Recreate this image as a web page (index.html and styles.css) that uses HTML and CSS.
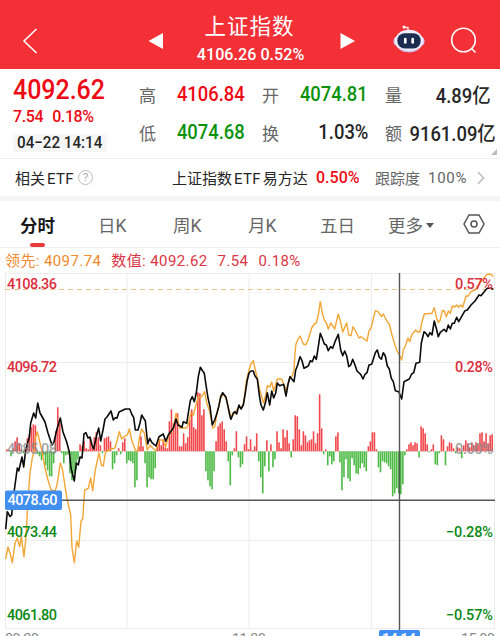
FILE: index.html
```html
<!DOCTYPE html>
<html lang="zh-CN">
<head>
  <meta charset="UTF-8">
  <meta name="viewport" content="width=device-width, initial-scale=1.0">
  <title>上证指数</title>
  <link rel="stylesheet" href="styles.css">
</head>
<body>

<header class="header">
  <svg class="back" width="16" height="28" viewBox="0 0 16 28"><path d="M14.5 2 L2 14 L14.5 26" /></svg>
  <svg class="prev" width="16" height="18" viewBox="0 0 16 18"><path d="M0.5 9 L15 1 V17 Z" /></svg>
  <div class="title">
    <h1>上证指数</h1>
    <p><span class="num">4106.26 0.52%</span></p>
  </div>
  <svg class="next" width="16" height="18" viewBox="0 0 16 18"><path d="M15 9 L0.5 1 V17 Z" /></svg>
  <svg class="robot" width="32" height="30" viewBox="0 0 32 30">
    <path d="M15 7 V3.5 H11" fill="none" stroke="#f9dede" stroke-width="1.4" />
    <circle cx="11" cy="3" r="1.5" fill="#fff" />
    <rect x="0.5" y="12" width="31" height="10.5" rx="5" fill="#d4cbf3" />
    <ellipse cx="16" cy="17" rx="14" ry="11.3" fill="#f1efff" />
    <path d="M5 23 Q16 31 27 23 Q23 28.4 16 28.3 Q9 28.4 5 23" fill="#c9b8ee" />
    <rect x="4.3" y="9.2" width="23.4" height="15.2" rx="7.4" fill="#1c2c50" />
    <rect x="11" y="13.8" width="2.6" height="6" rx="1.3" fill="#fff" />
    <rect x="18.4" y="13.8" width="2.6" height="6" rx="1.3" fill="#fff" />
  </svg>
  <svg class="search" width="28" height="28" viewBox="0 0 28 28"><circle cx="13.5" cy="13" r="11.8" /><path d="M21.5 21.5 L25.5 25.5" /></svg>
</header>

<section class="quote">
  <div class="quote-main">
    <div class="price"><span class="num">4092.62</span></div>
    <div class="change"><span>7.54</span><span>0.18%</span></div>
    <div class="date"><span class="num">04−22 14:14</span></div>
  </div>
  <dl class="quote-grid">
    <div><dt>高</dt><dd class="red">4106.84</dd></div>
    <div><dt>开</dt><dd class="green">4074.81</dd></div>
    <div><dt>量</dt><dd>4.89亿</dd></div>
    <div><dt>低</dt><dd class="green">4074.68</dd></div>
    <div><dt>换</dt><dd>1.03%</dd></div>
    <div><dt>额</dt><dd>9161.09亿</dd></div>
  </dl>
  <i class="corner"></i>
</section>

<section class="etf">
  <span class="etf-label">相关<b>ETF</b></span>
  <span class="help">?</span>
  <span class="etf-name">上证指数<b>ETF</b>易方达</span>
  <span class="etf-rate">0.50%</span>
  <span class="etf-track">跟踪度</span>
  <span class="etf-pct">100%</span>
  <svg width="8" height="14" viewBox="0 0 8 14"><path d="M1 1 L6.5 7 L1 13" /></svg>
</section>

<nav class="tabs">
  <a class="active">分时</a>
  <a>日K</a>
  <a>周K</a>
  <a>月K</a>
  <a>五日</a>
  <a>更多<i class="caret"></i></a>
  <svg width="22" height="20" viewBox="0 0 22 20"><path d="M6 1 H16 L21 10 L16 19 H6 L1 10 Z" /><circle cx="11" cy="10" r="3" /></svg>
</nav>

<div class="legend">
  <span class="lead">领先: 4097.74</span>
  <span>数值: 4092.62</span>
  <span>7.54</span>
  <span>0.18%</span>
</div>

<svg class="chart" width="500" height="363" viewBox="0 273 500 363">
  <g class="grid">
    <path d="M5 273.5 H494 M5 362.5 H494 M5 451.5 H494 M5 540.5 H494 M5 628.5 H494" />
    <path d="M5.5 273 V629 M127 273 V629 M249 273 V629 M371.5 273 V629 M494.5 273 V629" />
  </g>
  <path class="dash" d="M5 289.5 H494" />

  <g id="bars"></g>

  <polyline class="line-lead" points="5.7,559 8,547 10,553 12.3,562.7 15,543.3 17.3,538 19.7,546.7 21.3,536.7 24,556.7 26,536.7 28,500 30,473 32.3,458 34.3,450 35.3,438 37.3,432 39.3,440 42,451.7 45,468 48,480 51,490 55,491 57,485 59,471.7 60.3,463 62.7,470 65,486.7 67.3,500 70.7,515 72,548 74.3,562.7 76.7,541 78.7,547.3 81,521 82.7,519 84.7,490 88.3,488.3 90.7,478 92.7,490.7 95.3,470 99,452.7 101.3,465 103.3,466 105.3,453 108,450 115,448 117.3,440 119.3,431.7 121.7,439 124,436.7 127.3,435 129.3,429 131.7,440 135.7,451 137.7,451 139.3,438 141.7,429 144.3,433 147.3,450 150,445 152.5,448 156,450.7 159.3,440 163.3,440 165.7,446.7 168.3,436.7 173.3,428.3 176,413.3 178,421.7 180,428 186.7,428 188.7,423 190.7,413 193.3,415 196,405 198.3,396.7 200.3,398 202.7,395 204.7,391.7 206.7,403 209.3,410 211,418 212.7,428 214.7,426.7 216.7,415 220.7,398 223.3,394 226,398 231,417 235,413 239,406 241,409 244,401.7 246,383 249,370 251,364 253.3,360.7 255.3,370 257.3,378 259.7,390 263.7,403 265.7,395 267.3,385.7 269.7,387 271.7,382 273.7,391 277.3,379 281.7,379 284,385 286.3,390 290,376.7 292.3,376 294,370 295,353 296,344 297.7,340 300,336 303.3,344 306,344.7 308.3,339 311.7,328 314.3,324 316.3,323 318.3,315 320.3,301.7 322.3,313 324.3,320 326.3,322.7 328.3,329 330.7,323 334.7,329 338.3,314 340.3,320.7 342.7,332 346.7,323 348.7,335 351,335.7 353,326.7 355,330 359,338 361,336.7 364.3,339 367,341 369,330.7 371,328 375.3,310.7 378,311.7 381.3,316.7 383.3,314 387.3,322 389.3,324 392,335 395,345 396.7,350 399.3,355 401.7,360 403.3,350 405.3,346 408,338 409.7,341.7 411.7,335 415.7,330 417.7,332 420,332 422,321.7 424.3,314 432,313.3 434.3,307.7 436.3,316.7 438.3,322.7 440.3,320 442.3,310.7 444.3,310.7 446.3,316.7 448.3,311 450.3,313.3 452.3,306 454.7,307 456.7,305 458.7,307.3 460.7,305 462.7,307.3 466,296 468.3,296 471,291.7 475,290 478.3,285 481.7,280.7 485,276.7 487.3,274.3 490.7,274.3 493.3,276.7" />
  <polyline class="line-price" points="5.7,529.3 7.3,511.7 10,516.5 11.7,515 13,500 17.3,468 18.7,471 22,457 23.7,467 25.7,450 29.3,437 30.7,423 32.5,417 33.7,413 35.7,418 37.7,403 40,413 42.3,417 45,422 48,433 52,445 54,442 56.7,430 60.3,418 63,432 66.7,442 69.3,452 71,468 74.3,481 76.3,463 78.3,465 80,457 82,458 84,434 86,432.7 88,438 90,437 92,445 93.7,449 96.7,435 98.7,428 100.7,441 103,430 105,419 107,417 111,411 113.3,420 115.3,417.7 117,418 119,412 121.7,410.7 125.3,409 129.7,409 131.7,414 133.7,417.7 135.3,430 138,430 140,423 141.7,415 143.3,417.7 145.3,420.7 147.7,444 149.7,438.3 152,442.7 156,446 159,436.7 163.3,434 165.7,441.3 168.3,435 173.3,428 176,419 178,425 182,427.3 183.3,421.7 186.7,423.3 188.3,413 190.3,400.7 192.3,396.7 194.3,401.7 196.3,393 198.3,376.7 200.3,367.3 202.7,371 204.3,373.3 206,385 208,398 210,406.7 212.3,425 214.7,420 216.7,414 218.7,406.7 220.7,396.7 222.7,392.7 226,397.3 228,406.7 230,416.7 231,419.3 233.3,413 235,411.7 236.7,414 239,405 241,409 243.3,405 245.3,393 247.3,380 249,373 251,371 253.3,371 255,376 257.3,379 259.3,395 261,405 263.3,410 265.7,401.7 267.3,392.7 269.7,405 271.7,391 273.7,398 275.7,393 277.3,383 279.7,385.7 283.7,384.3 286,396 288,384.3 290,376.7 294,381.7 295.7,370 297.7,365 300,356.7 302,360.7 304,368.3 308.3,366 310.3,360.7 312.3,361.7 314.3,356 316.3,359.3 318.3,346.7 320.3,333.3 322.3,338.3 324.3,344 326.3,345 328.3,350.7 330.7,346.7 332.7,348.3 335,341.7 338.3,334.3 340.7,350 342.7,355.7 344.7,351 346.7,356 348.7,366.7 350.7,365 352.7,359.3 355,365 357,371 360.7,374.3 363,379 365,374.3 367,372.7 369,365 371.7,364.3 373.3,359.3 375.3,352.7 377.3,350 379.3,357.3 381.3,359.3 383.3,352.7 385.3,356 387.3,366 389.3,369 391.3,378.3 393.3,381.7 395.3,390.7 398.7,391.7 401.7,399 404,381.7 409.3,379 411.7,374 413.7,372.7 416,363.3 419.7,362.3 421.3,343.3 424,331.7 426,333.3 428,336.7 430,332.7 432,335 434.3,321 436.3,328.3 438.3,336.7 440.3,332.3 444,329.3 446.3,331.7 448.3,325 450.3,329 452.3,323.3 454.3,323.3 456.7,317.3 458.7,321.7 465,310.7 467.3,310 471,305 475,301 479,295 481,295.7 485,290.7 487.3,288.3 490.7,288.3 493.3,289.3" />

  <g class="labels">
    <text class="up" x="7" y="288.5" textLength="50">4108.36</text>
    <text class="up" x="7" y="371.5" textLength="50">4096.72</text>
    <text class="flat" x="7" y="454" textLength="50">4085.08</text>
    <text class="down" x="7" y="537" textLength="50">4073.44</text>
    <text class="down" x="7" y="620" textLength="50">4061.80</text>
    <text class="up" x="455" y="288.5" textLength="38">0.57%</text>
    <text class="up" x="455" y="371.5" textLength="38">0.28%</text>
    <text class="flat" x="455" y="454" textLength="38">0.00%</text>
    <text class="down" x="446" y="537" textLength="47">−0.28%</text>
    <text class="down" x="446" y="620" textLength="47">−0.57%</text>
    <text class="time" x="5" y="644" textLength="34">09:30</text>
    <text class="time" x="232" y="644" textLength="34">11:30</text>
    <text class="time" x="461" y="644" textLength="34">15:00</text>
  </g>

  <path class="cross" d="M5 500.3 H495 M399.5 273 V630" />
  <rect class="tag" x="5" y="490.5" width="57" height="19.5" rx="2" />
  <text class="tag-text" x="7.5" y="505" textLength="50">4078.60</text>
  <rect class="tag" x="379" y="630" width="41" height="19" rx="2" />
  <text class="tag-text" x="382" y="644" textLength="34">14:14</text>
</svg>

<script>
  // one value per minute, positive goes above the zero line
  const bars = [
    2, 1, -5, 3, 10, 14, 8, 2, -2, 3, 13, 17, 24, 27, 26, -3, -5, -9, -4, -14,
    -19, -25, -25, -12, 20, 44, 28, -2, -12, -4, -3, -22, -29, -22, -18, -8, 7, 5, 10, 3,
    2, 13, 6, 14, 19, 14, 6, -2, 13, 14, 15, 10, -18, -12, -4, 3, -3, 9, 13, -12,
    -9, -10, -12, -36, -29, 5, 15, 5, -12, -36, -26, -28, -28, -17, 5, 12, 6, 12, 4, 3,
    30, 42, 28, 32, 38, 5, 5, 18, 8, 14, 32, 42, 24, 22, 59, 58, 36, 42, -20, -29,
    -35, -38, -20, 10, 25, 28, 30, 22, 10, -10, -34, -4, 3, 20, -6, -16, -13, 7, 15, 2,
    12, 1, 5, 18, -10, -26, -42, -15, 11, -20, 7, -16, -8, 20, 9, 3, 22, 14, 21, 8,
    -6, 12, 36, 35, 22, 6, 20, 16, 9, 11, 12, 20, 8, 18, 57, 23, -3, 2, -14, -5,
    -13, -10, 15, 19, -11, -39, -26, -8, -27, -30, -7, -14, -22, -23, -17, -12, -16, -20, 5, 10,
    19, 19, 2, -16, -21, -10, -11, -12, -15, -18, -45, -42, -37, -42, -43, -33, -4, 2, 7, 9,
    6, 9, 8, -6, 25, 23, 18, 7, -1, 2, 7, -13, -14, -2, 16, 12, -14, 5, 9, 8,
    3, -2, 4, 3, -7, 6, 11, 8, 4, 9, 6, 9, 7, 18, 19, 10, 18, 8, 16, 17
  ];
  const zero = 451.3;
  let html = '';
  bars.forEach((v, i) => {
    const x = (6.2 + i * 2.03).toFixed(2);
    const y = v > 0 ? zero - v : zero;
    html += `<rect class="${v > 0 ? 'bar-up' : 'bar-down'}" x="${x}" y="${y}" width="1.6" height="${Math.abs(v)}" />`;
  });
  document.getElementById('bars').innerHTML = html;
</script>

</body>
</html>
```
FILE: styles.css
```css
* {
  box-sizing: border-box;
}
body {
  margin: 0;
  width: 500px;
  height: 636px;
  overflow: hidden;
  background: #fff;
  color: #262626;
  font-family: Roboto, "Noto Sans CJK SC", sans-serif;
}
h1, p, dl, dd {
  margin: 0;
}
svg {
  display: block;
  flex: none;
}
.num {
  display: inline-block;
}
.red {
  color: #ee0a14;
}
.green {
  color: #0a930a;
}

/* header */
.header {
  display: flex;
  align-items: center;
  height: 69px;
  padding: 13px 0 0 22px;
  background: #f23036;
  color: #fff;
}
.back, .search {
  fill: none;
  stroke: #fff;
  stroke-width: 1.6;
}
.prev, .next {
  fill: #fff;
}
.prev {
  margin-left: 110px;
}
.title {
  width: 174px;
  margin-top: -1px;
  text-align: center;
}
.title h1 {
  margin-left: -3px;
  font-size: 21.5px;
  font-weight: 400;
  line-height: 28px;
  letter-spacing: 1px;
}
.title p {
  font-size: 17px;
  line-height: 27px;
  font-weight: 500;
}
.title .num {
  margin: 0 -10px;
  transform: scaleX(0.95);
}
.next {
  margin-left: 2px;
}
.robot {
  margin-left: 37px;
  margin-top: -4px;
}
.search {
  margin-left: 25px;
}

/* quote */
.quote {
  position: relative;
  display: flex;
  height: 90px;
  border-bottom: 1px solid #eee;
}
.quote-main {
  width: 139px;
  padding: 5px 0 0 13px;
}
.price {
  height: 32px;
  color: #ee0a14;
  font-size: 28.5px;
  font-weight: 500;
  line-height: 32px;
}
.price .num {
  transform: scaleX(0.875);
  transform-origin: left;
}
.change {
  display: flex;
  gap: 9px;
  color: #ee0a14;
  font-size: 16px;
  font-weight: 500;
  line-height: 22px;
  letter-spacing: -0.4px;
}
.date {
  width: 94px;
  height: 18px;
  margin-top: 6px;
  padding-left: 4px;
  border-radius: 3px;
  background: #f6f6f6;
  font-size: 16.5px;
  font-weight: 500;
  line-height: 18px;
  white-space: nowrap;
}
.date .num {
  transform: scaleX(0.92);
  transform-origin: left;
}
.quote-grid {
  display: grid;
  grid-template-columns: repeat(3, 106px);
  grid-auto-rows: 38px;
  column-gap: 17px;
  padding-top: 6px;
}
.quote-grid div {
  display: flex;
  align-items: center;
  justify-content: space-between;
}
.quote-grid dt {
  color: #666;
  font-size: 17px;
}
.quote-grid dd {
  font-size: 20px;
  font-weight: 500;
  white-space: nowrap;
  transform: scaleX(0.92);
  transform-origin: right;
}
.corner {
  position: absolute;
  right: 3px;
  bottom: 3px;
  border-left: 6px solid transparent;
  border-bottom: 6px solid #bbb;
}

/* etf row */
.etf {
  display: flex;
  align-items: center;
  height: 42px;
  padding-left: 15px;
  border-bottom: 5px solid #f4f4f4;
  font-size: 15px;
  white-space: nowrap;
}
.etf b {
  margin-left: 2px;
  font-weight: 400;
  letter-spacing: 0.3px;
}
.etf-label {
  width: 63px;
}
.help {
  width: 15px;
  height: 15px;
  border: 1px solid #bbb;
  border-radius: 50%;
  color: #aaa;
  font-size: 11px;
  line-height: 13px;
  text-align: center;
}
.etf-name {
  width: 144px;
  margin-left: 79px;
}
.etf-name b {
  margin-right: 2px;
}
.etf-rate {
  width: 59px;
  color: #ee0a14;
  font-size: 16px;
  font-weight: 500;
}
.etf-track {
  width: 53px;
  color: #666;
}
.etf-pct {
  width: 49px;
  color: #666;
  letter-spacing: 0.7px;
}
.etf svg {
  fill: none;
  stroke: #bbb;
  stroke-width: 1.5;
}

/* tabs */
.tabs {
  display: flex;
  align-items: center;
  height: 47px;
  padding-left: 20px;
  border-bottom: 1px solid #eee;
  color: #666;
  font-size: 17.5px;
}
.tabs a {
  position: relative;
  width: 75px;
  white-space: nowrap;
}
.tabs a:first-child {
  width: 78px;
}
.tabs a:nth-child(4) {
  width: 72px;
}
.tabs a:nth-child(5) {
  width: 68px;
}
.tabs .active {
  color: #1a1a1a;
  font-weight: 700;
}
.tabs .active::after {
  content: "";
  position: absolute;
  left: 10px;
  bottom: -10px;
  width: 15px;
  height: 4px;
  border-radius: 2px;
  background: #e93b3d;
}
.caret {
  display: inline-block;
  margin-left: 3px;
  vertical-align: 4px;
  border: 4px solid transparent;
  border-top: 5px solid #555;
  border-bottom: 0;
}
.tabs svg {
  fill: none;
  stroke: #555;
  stroke-width: 1.5;
}

/* legend */
.legend {
  display: flex;
  gap: 10px;
  height: 25px;
  padding-left: 5px;
  color: #dc3545;
  font-size: 15px;
  line-height: 26px;
  letter-spacing: 0.4px;
  white-space: nowrap;
}
.legend .lead {
  color: #f08a2c;
}

/* chart */
.grid path {
  fill: none;
  stroke: #ececec;
}
.dash {
  stroke: #e3c48c;
  stroke-dasharray: 5 4;
}
.bar-up {
  fill: #f0484c;
}
.bar-down {
  fill: #4dba45;
}
.line-lead, .line-price {
  fill: none;
  stroke-linejoin: round;
}
.line-lead {
  stroke: #f3a536;
  stroke-width: 1.4;
}
.line-price {
  stroke: #0a0a0a;
  stroke-width: 1.6;
}
.labels text, .tag-text {
  font-size: 14.5px;
  font-weight: 500;
}
.labels .up {
  fill: #dc3040;
}
.labels .down {
  fill: #0a8a14;
}
.labels .flat {
  fill: #888;
  fill-opacity: 0.8;
}
.labels .time {
  fill: #888;
  font-weight: 400;
}
.cross {
  stroke: #555;
  stroke-width: 1.4;
}
.tag {
  fill: #3f8ef0;
}
.tag-text {
  fill: #fff;
}
```
